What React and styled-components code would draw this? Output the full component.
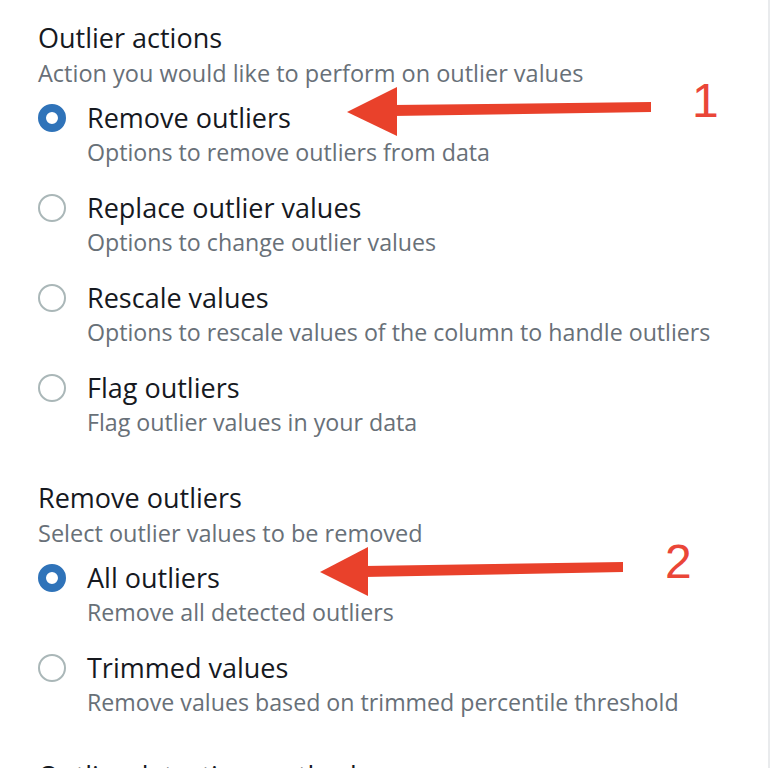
import React from "react";
import styled, { createGlobalStyle } from "styled-components";

const Global = createGlobalStyle`
  html, body { margin: 0; padding: 0; background: #ffffff; }
  body { font-family: "Open Sans", "Noto Sans", sans-serif; overflow: hidden; }
`;

const Page = styled.div`
  position: relative;
  width: 770px;
  height: 768px;
  box-sizing: border-box;
  border-right: 2px solid #e9ebed;
  padding: 20px 0 0 38px;
  display: flex;
  flex-direction: column;
  gap: 42px;
  overflow: hidden;
`;

const Section = styled.section`
  display: flex;
  flex-direction: column;
`;

const Heading = styled.h2`
  margin: 0;
  font-size: 27px;
  line-height: 36px;
  font-weight: 400;
  color: #16191f;
  white-space: nowrap;
`;

const FieldLabel = styled(Heading)`
  line-height: 32px;
`;

const Description = styled.p`
  margin: 1px 0 0;
  font-size: 23.5px;
  line-height: 32px;
  color: #687078;
  white-space: nowrap;
`;

const Group = styled.div`
  margin-top: 11px;
  display: flex;
  flex-direction: column;
  gap: 22px;
`;

const Option = styled.label`
  display: grid;
  grid-template-columns: 28px 1fr;
  column-gap: 21px;
  align-items: start;
`;

const Radio = styled.span`
  box-sizing: border-box;
  width: 28px;
  height: 28px;
  margin-top: 4px;
  border-radius: 50%;
  background: #ffffff;
  border: ${(p) => (p.$checked ? "8px solid #2f73b9" : "2px solid #aab7b8")};
`;

const OptionText = styled.span`
  display: flex;
  flex-direction: column;
`;

const Label = styled.span`
  font-size: 27px;
  line-height: 36px;
  color: #16191f;
  white-space: nowrap;
`;

const Sub = styled.span`
  font-size: 23.2px;
  line-height: 32px;
  color: #687078;
  white-space: nowrap;
`;

const Overlay = styled.svg`
  position: absolute;
  left: 0;
  top: 0;
  width: 770px;
  height: 768px;
  pointer-events: none;
`;

const Num = styled.text`
  font-family: "Liberation Sans", Arial, sans-serif;
  font-size: 48px;
  fill: #ea4638;
`;

const sections = [
  {
    title: "Outlier actions",
    desc: "Action you would like to perform on outlier values",
    options: [
      { label: "Remove outliers", sub: "Options to remove outliers from data", checked: true },
      { label: "Replace outlier values", sub: "Options to change outlier values" },
      { label: "Rescale values", sub: "Options to rescale values of the column to handle outliers" },
      { label: "Flag outliers", sub: "Flag outlier values in your data" },
    ],
  },
  {
    title: "Remove outliers",
    desc: "Select outlier values to be removed",
    options: [
      { label: "All outliers", sub: "Remove all detected outliers", checked: true },
      { label: "Trimmed values", sub: "Remove values based on trimmed percentile threshold" },
    ],
  },
];

export default function App() {
  return (
    <>
      <Global />
      <Page>
        {sections.map((s) => (
          <Section key={s.title}>
            <Heading>{s.title}</Heading>
            <Description>{s.desc}</Description>
            <Group>
              {s.options.map((o) => (
                <Option key={o.label}>
                  <Radio $checked={o.checked} />
                  <OptionText>
                    <Label>{o.label}</Label>
                    <Sub>{o.sub}</Sub>
                  </OptionText>
                </Option>
              ))}
            </Group>
          </Section>
        ))}
        <Section>
          <FieldLabel>Outlier detection method</FieldLabel>
        </Section>
        <Overlay viewBox="0 0 770 768">
          <polygon points="392,105 651,102 651,112 392,116" fill="#e9412b" />
          <polygon points="347,112 397,87 397,136" fill="#e9412b" />
          <polygon points="364,566 623,562 623,572 364,577" fill="#e9412b" />
          <polygon points="320,572 368,547 368,596" fill="#e9412b" />
          <Num x="692" y="117">1</Num>
          <Num x="665" y="578">2</Num>
        </Overlay>
      </Page>
    </>
  );
}
